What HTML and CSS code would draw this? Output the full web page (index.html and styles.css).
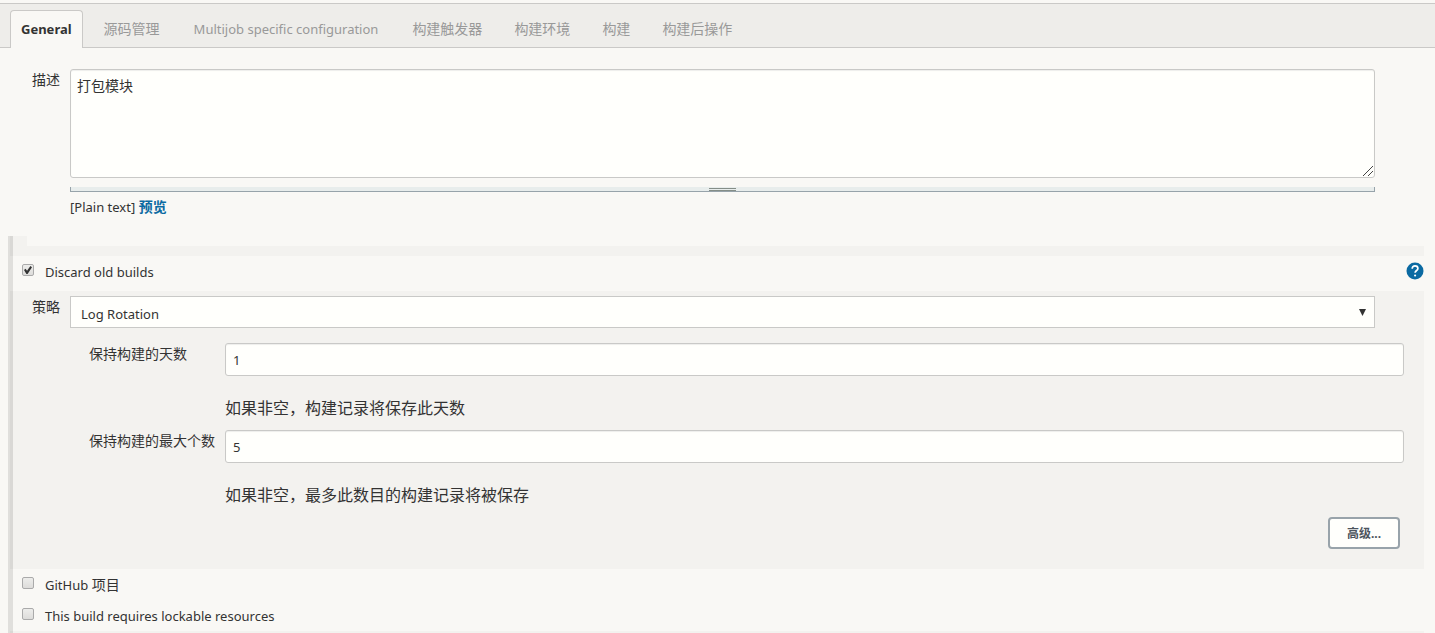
FILE: index.html
```html
<!DOCTYPE html>
<html lang="zh-CN">
<head>
<meta charset="utf-8">
<title>General</title>
<link rel="stylesheet" href="styles.css">
</head>
<body>
<nav class="tabs">
  <a class="tab tab-active" href="#general">General</a>
  <a class="tab" href="#scm">源码管理</a>
  <a class="tab tab-latin" href="#multijob">Multijob specific configuration</a>
  <a class="tab" href="#triggers">构建触发器</a>
  <a class="tab" href="#environment">构建环境</a>
  <a class="tab" href="#build">构建</a>
  <a class="tab" href="#post-build">构建后操作</a>
</nav>
<form class="config">
  <div class="description">
    <label class="side-label" for="description">描述</label>
    <div class="description-body">
      <textarea class="box description-text" id="description">打包模块</textarea>
      <div class="handle"><span class="grip"></span></div>
      <div class="format"><span class="latin">[Plain text]</span> <a class="preview" href="#preview">预览</a></div>
    </div>
  </div>
  <div class="options">
    <div class="spacer"></div>
    <div class="divider"></div>
    <div class="option option-discard">
      <input class="check" type="checkbox" id="discard" checked>
      <label class="latin" for="discard">Discard old builds</label>
      <button class="help" type="button" aria-label="Help">
        <svg class="help-icon" viewBox="0 0 18 18"><circle cx="9" cy="9" r="8.5" fill="#0b6aa2"/><path d="M6.2 6.7C6.2 4.8 7.3 3.8 9 3.8s2.9 1 2.9 2.6c0 2-2.8 2.2-2.8 4.4" fill="none" stroke="#fff" stroke-width="1.7"/><circle cx="9.1" cy="13.5" r="1.1" fill="#fff"/></svg>
      </button>
    </div>
    <div class="panel">
      <div class="strategy">
        <label class="side-label" for="strategy">策略</label>
        <div class="select-wrap">
          <select class="select latin" id="strategy"><option>Log Rotation</option></select>
          <span class="arrow"></span>
        </div>
      </div>
      <div class="fields">
        <label class="field-label" for="days">保持构建的天数</label>
        <input class="box field-input" id="days" type="text" value="1">
        <p class="hint">如果非空，构建记录将保存此天数</p>
        <label class="field-label" for="max">保持构建的最大个数</label>
        <input class="box field-input" id="max" type="text" value="5">
        <p class="hint">如果非空，最多此数目的构建记录将被保存</p>
      </div>
      <div class="actions"><button class="advanced" type="button">高级...</button></div>
    </div>
    <div class="option">
      <input class="check" type="checkbox" id="github">
      <label for="github"><span class="latin">GitHub</span> 项目</label>
    </div>
    <div class="option">
      <input class="check" type="checkbox" id="lockable">
      <label class="latin" for="lockable">This build requires lockable resources</label>
    </div>
    <div class="tail"></div>
  </div>
</form>
</body>
</html>
```
FILE: styles.css
```css
* { box-sizing: border-box; }
body {
  margin: 0;
  padding-top: 3px;
  background: #f9f8f5;
  color: #333;
  font: 14px/20px "Noto Sans", "Noto Sans CJK SC", sans-serif;
}
.latin { font-size: 13px; }
.tabs {
  display: flex;
  align-items: flex-end;
  gap: 10px;
  height: 45px;
  padding-left: 10px;
  background: #eeedea;
  border-top: 1px solid #cac9c7;
  border-bottom: 1px solid #cac9c7;
}
.tab {
  height: 37px;
  padding: 0 10px;
  border: 1px solid transparent;
  border-bottom: 0;
  border-radius: 4px 4px 0 0;
  color: #999;
  line-height: 36px;
  text-decoration: none;
  white-space: nowrap;
}
.tab-latin {
  padding: 0 12px;
  font-size: 13px;
}
.tab-active {
  height: 38px;
  margin-bottom: -1px;
  background: #f9f8f5;
  border-color: #cac9c7;
  color: #333;
  font-size: 13px;
  font-weight: 700;
}
.config { padding: 21px 11px 0 8px; }
.description, .strategy {
  display: grid;
  grid-template-columns: 38px 1fr;
}
.description { padding: 0 49px 0 24px; }
.side-label { line-height: 22px; }
.box {
  display: block;
  width: 100%;
  background: #fffffc;
  border: 1px solid #c9c9c7;
  border-radius: 3px;
  box-shadow: inset 0 1px 1px #eeeeeb;
  color: #333;
}
.description-text {
  height: 109px;
  padding: 6px;
  font: inherit;
  resize: vertical;
}
.description-text::-webkit-resizer {
  background: url("data:image/svg+xml,%3Csvg xmlns='http://www.w3.org/2000/svg' width='12' height='12'%3E%3Cpath d='M1 11L11 1M6 11l5-5' stroke='%23444' fill='none'/%3E%3C/svg%3E") no-repeat right bottom;
}
.handle {
  display: flex;
  justify-content: center;
  height: 5px;
  margin-top: 9px;
  background: #e8edec;
  border: 1px solid #97a3aa;
  border-top: 0;
}
.grip {
  width: 27px;
  height: 3px;
  margin-top: 1px;
  border-top: 1px solid #858e88;
  border-bottom: 1px solid #858e88;
}
.format { margin-top: 5px; }
.preview {
  color: #0b6aa2;
  font-weight: 700;
  text-decoration: none;
}
.options {
  margin-top: 19px;
  border-left: 5px solid #e0dfdc;
}
.spacer {
  height: 10px;
  border-left: 14px solid #f3f2ef;
}
.divider { height: 10px; background: #f3f2ef; }
.spacer, .divider, .panel, .tail { box-shadow: -3px 0 0 #d9d8d5; }
.option {
  display: flex;
  align-items: center;
  gap: 11px;
  height: 31px;
  padding-left: 9px;
}
.option-discard {
  height: 35px;
  padding-bottom: 4px;
}
.check {
  position: relative;
  appearance: none;
  width: 12px;
  height: 12px;
  margin: 0 0 3px;
  background: linear-gradient(#ededeb, #dddcda);
  border: 1px solid #aaa;
  border-radius: 2px;
}
.check:checked::after {
  content: "";
  position: absolute;
  inset: 1px;
  background: #333;
  clip-path: polygon(0 50%, 20% 35%, 38% 58%, 80% 0, 100% 15%, 45% 100%, 30% 100%);
}
.help {
  width: 18px;
  height: 18px;
  margin: 0 0 2px auto;
  padding: 0;
  background: none;
  border: 0;
}
.help-icon { display: block; }
.panel {
  padding: 5px 20px 20px 19px;
  background: #f3f2ef;
}
.strategy { padding-right: 29px; }
.select-wrap { position: relative; }
.select {
  display: block;
  appearance: none;
  width: 100%;
  height: 32px;
  padding: 3px 10px 0;
  background: #fffffc;
  border: 1px solid #c9c9c7;
  border-radius: 0;
  color: #333;
  font-family: inherit;
}
.arrow {
  position: absolute;
  top: 13px;
  right: 9px;
  width: 7px;
  height: 7px;
  background: #333;
  clip-path: polygon(0 0, 100% 0, 50% 100%);
  pointer-events: none;
}
.fields {
  display: grid;
  grid-template-columns: 136px 1fr;
  margin: 15px 0 0 57px;
}
.field-label { line-height: 22px; }
.field-input {
  height: 33px;
  padding: 1px 7px 0;
  font: 13px "Noto Sans", sans-serif;
}
.hint {
  grid-column: 2;
  margin: 0;
  padding-top: 20px;
  height: 54px;
  font-size: 16px;
  line-height: 24px;
}
.actions {
  display: flex;
  justify-content: flex-end;
  padding-right: 4px;
}
.advanced {
  width: 72px;
  height: 32px;
  padding: 0;
  background: #fffffc;
  border: 2px solid #98a3aa;
  border-radius: 4px;
  color: #4d545d;
  font: 700 12px "Noto Sans", "Noto Sans CJK SC", sans-serif;
}
.tail { height: 2px; background: #f3f2ef; }
```
